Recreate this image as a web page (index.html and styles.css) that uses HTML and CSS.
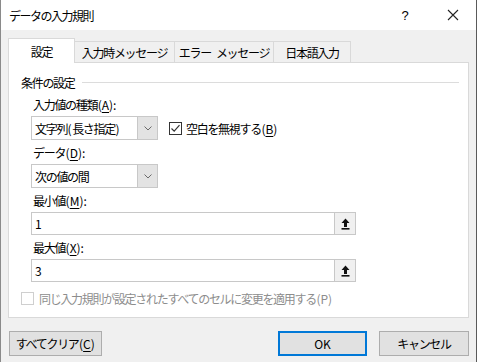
FILE: index.html
```html
<!DOCTYPE html>
<html lang="ja">
<head>
<meta charset="utf-8">
<link rel="stylesheet" href="styles.css">
</head>
<body>
<div class="window">
  <div class="titlebar">
    <span class="title">データの入力規則</span>
    <span class="tb-btn help">?</span>
    <span class="tb-btn close">
      <svg width="12" height="12" viewBox="0 0 12 12"><path d="M1 1L11 11M11 1L1 11" stroke="#222" stroke-width="1.1"/></svg>
    </span>
  </div>
  <div class="main">
    <div class="tabs">
      <div class="tab active t1">設定</div>
      <div class="tab t2">入力時メッセージ</div>
      <div class="tab t3">エラー<span class="sp"> </span>メッセージ</div>
      <div class="tab t4">日本語入力</div>
    </div>
    <div class="panel">
      <div class="group-head"><span>条件の設定</span><span class="rule"></span></div>
      <div class="group-body">
        <div class="label first">入力値の種類<span class="en">(<u>A</u>):</span></div>
        <div class="row">
          <div class="combo"><span class="val">文字列<span class="en">(</span>長さ指定<span class="en">)</span></span><span class="drop"><svg width="8" height="5" viewBox="0 0 8 5"><path d="M0.5 0.5L4 4L7.5 0.5" fill="none" stroke="#6a6a6a" stroke-width="1"/></svg></span></div>
          <div class="check"><span class="box"><svg width="11" height="11" viewBox="0 0 11 11"><path d="M1.5 5.5L4.2 8.2L9.5 2.2" fill="none" stroke="#333" stroke-width="1.2"/></svg></span>空白を無視する<span class="en">(<u>B</u>)</span></div>
        </div>
        <div class="label">データ<span class="en">(<u>D</u>):</span></div>
        <div class="combo"><span class="val">次の値の間</span><span class="drop"><svg width="8" height="5" viewBox="0 0 8 5"><path d="M0.5 0.5L4 4L7.5 0.5" fill="none" stroke="#6a6a6a" stroke-width="1"/></svg></span></div>
        <div class="label">最小値<span class="en">(<u>M</u>):</span></div>
        <div class="textbox"><span class="val">1</span><span class="ref"><svg width="9" height="12" viewBox="0 0 9 12"><path d="M4.5 0.5L8.5 5H6V9H3V5H0.5Z" fill="#111"/><rect x="0.5" y="10" width="8" height="1.6" fill="#111"/></svg></span></div>
        <div class="label">最大値<span class="en">(<u>X</u>):</span></div>
        <div class="textbox"><span class="val">3</span><span class="ref"><svg width="9" height="12" viewBox="0 0 9 12"><path d="M4.5 0.5L8.5 5H6V9H3V5H0.5Z" fill="#111"/><rect x="0.5" y="10" width="8" height="1.6" fill="#111"/></svg></span></div>
      </div>
      <div class="check disabled"><span class="box"></span>同じ入力規則が設定されたすべてのセルに変更を適用する<span class="en">(P)</span></div>
    </div>
    <div class="footer">
      <div class="btn clear">すべてクリア<span class="en">(<u>C</u>)</span></div>
      <div class="spacer"></div>
      <div class="btn ok"><span class="en">OK</span></div>
      <div class="btn cancel">キャンセル</div>
    </div>
  </div>
</div>
</body>
</html>
```
FILE: styles.css
```css
html, body {
  margin: 0;
  padding: 0;
  width: 477px;
  height: 362px;
  overflow: hidden;
  background: #f0f0f0;
}
body {
  font-family: "Noto Sans CJK JP", "Noto Sans", sans-serif;
  font-size: 12px;
  letter-spacing: -1.3px;
  color: #000;
}
.en { letter-spacing: 0; padding: 0 0.5px; }
.sp { display: inline-block; width: 5px; }
u { text-decoration: underline; text-underline-offset: 2px; }
.window {
  width: 477px;
  height: 362px;
  box-sizing: border-box;
  border-left: 1px solid #8a8a8a;
  border-right: 1px solid #5a5a5a;
  background: #f0f0f0;
}
.titlebar {
  height: 30px;
  background: #fff;
  display: flex;
  align-items: center;
  padding-left: 8px;
}
.title { flex: 1; font-size: 12px; letter-spacing: -1.5px; }
.tb-btn {
  width: 46px;
  height: 30px;
  display: flex;
  align-items: center;
  justify-content: center;
  letter-spacing: 0;
}
.help { font-family: "Liberation Sans", sans-serif; font-size: 13px; margin-right: 2px; }
.main {
  padding: 8px 7px 0 7px;
}
.tabs {
  display: flex;
  align-items: flex-end;
  height: 24px;
  position: relative;
  z-index: 1;
}
.tab {
  height: 21px;
  box-sizing: border-box;
  border: 1px solid #d9d9d9;
  border-bottom: none;
  background: #f0f0f0;
  display: flex;
  align-items: center;
  justify-content: center;
  margin-left: -1px;
}
.tab.active {
  height: 25px;
  margin-bottom: -1px;
  background: #fff;
  margin-left: 0;
  padding-top: 1px;
}
.t1 { width: 67px; }
.t2 { width: 101px; }
.t3 { width: 100px; }
.t4 { width: 78px; }
.panel {
  height: 256px;
  box-sizing: border-box;
  background: #fff;
  border: 1px solid #d9d9d9;
  padding: 11px 0 0 12px;
}
.group-head {
  display: flex;
  align-items: center;
  height: 16px;
  margin-right: 9px;
}
.group-head .rule {
  flex: 1;
  height: 1px;
  background: #dcdcdc;
  margin-left: 7px;
}
.group-body { padding-left: 10px; }
.label { height: 16px; line-height: 16px; margin-top: 5px; margin-bottom: 3px; padding-left: 2px; }
.label.first { margin-top: 7px; }
.row { display: flex; align-items: center; }
.combo {
  width: 127px;
  height: 24px;
  box-sizing: border-box;
  border: 1px solid #c8c8c8;
  display: flex;
  background: #fff;
}
.val { flex: 1; display: flex; align-items: center; padding-left: 3px; }
.drop {
  width: 19px;
  background: #e3e3e3;
  border-left: 1px solid #c8c8c8;
  display: flex;
  align-items: center;
  justify-content: center;
}
.check { display: flex; align-items: center; margin-left: 11px; }
.box {
  width: 13px;
  height: 13px;
  box-sizing: border-box;
  border: 1px solid #333;
  background: #fff;
  margin-right: 4px;
  display: flex;
  align-items: center;
  justify-content: center;
  letter-spacing: 0;
}
.textbox {
  width: 325px;
  height: 23px;
  box-sizing: border-box;
  border: 1px solid #c8c8c8;
  display: flex;
  background: #fff;
}
.ref {
  width: 20px;
  background: #f0f0f0;
  border-left: 1px solid #c8c8c8;
  display: flex;
  align-items: center;
  justify-content: center;
}
.check.disabled {
  margin-left: 0;
  margin-top: 8px;
  color: #8d8d8d;
  height: 16px;
}
.check.disabled .box { border-color: #cfcfcf; margin-right: 5px; }
.footer {
  display: flex;
  margin-top: 13px;
  padding-left: 1px;
}
.spacer { flex: 1; }
.btn {
  height: 25px;
  box-sizing: border-box;
  border: 1px solid #adadad;
  background: #e1e1e1;
  display: flex;
  align-items: center;
  justify-content: center;
}
.clear { width: 93px; }
.ok { width: 89px; border: 2px solid #0078d7; margin-right: 12px; }
.cancel { width: 90px; }
```
